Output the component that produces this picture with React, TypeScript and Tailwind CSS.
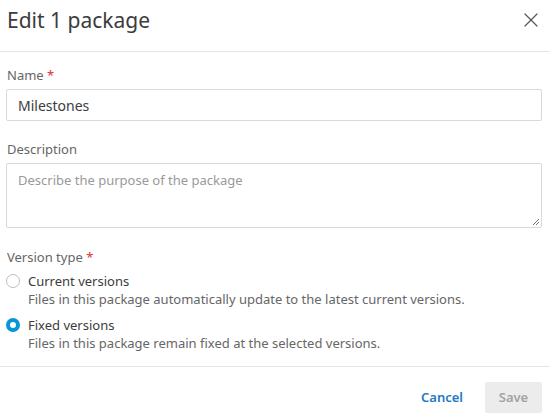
import { X } from 'lucide-react';

function Radio({ checked }: { checked: boolean }) {
  return checked ? (
    <span className="mt-[2px] w-[14px] h-[14px] rounded-full border-[4px] border-[#0696d7] bg-white shrink-0" />
  ) : (
    <span className="mt-[2px] w-[14px] h-[14px] rounded-full border border-[#bdbdbd] bg-white shrink-0" />
  );
}

export default function App() {
  const options = [
    { label: 'Current versions', desc: 'Files in this package automatically update to the latest current versions.', checked: false },
    { label: 'Fixed versions', desc: 'Files in this package remain fixed at the selected versions.', checked: true },
  ];

  return (
    <div className="w-[550px] h-[418px] bg-white flex flex-col text-[#3c3c3c]" style={{ fontFamily: '"Noto Sans", sans-serif' }}>
      {/* Header */}
      <div className="h-[52px] border-b border-[#e6e6e6] flex items-start justify-between pl-[7px] pr-[7px] pt-[5px]">
        <h1 className="text-[21px] leading-[30px] text-[#3c3c3c]">Edit 1 package</h1>
        <button className="mt-[3px] text-[#555]">
          <X className="w-[24px] h-[24px]" strokeWidth={1.2} />
        </button>
      </div>

      {/* Body */}
      <div className="flex-1 pl-[6px] pr-[8px] pt-[14px]">
        <label className="block pl-[1px] text-[13px] leading-[18px] text-[#666]">
          Name <span className="text-[#e02f2f]">*</span>
        </label>
        <div className="mt-[5px] h-[32px] border border-[#d9d9d9] rounded-[2px] flex items-center px-[11px] text-[14px]">
          Milestones
        </div>

        <label className="block mt-[19px] pl-[1px] text-[13px] leading-[18px] text-[#666]">Description</label>
        <div className="relative mt-[5px] h-[65px] border border-[#d9d9d9] rounded-[2px] px-[11px] pt-[7px] text-[13px] text-[#999]">
          Describe the purpose of the package
          <svg className="absolute right-[1px] bottom-[1px]" width="8" height="8" viewBox="0 0 8 8">
            <path d="M7 1 L1 7 M7 4 L4 7" stroke="#777" strokeWidth="1" />
          </svg>
        </div>

        <label className="block mt-[20px] pl-[1px] text-[13px] leading-[18px] text-[#666]">
          Version type <span className="text-[#e02f2f]">*</span>
        </label>
        <div className="mt-[6px] flex flex-col gap-[8px]">
          {options.map((o) => (
            <div key={o.label} className="flex gap-[8px]">
              <Radio checked={o.checked} />
              <div>
                <div className="text-[13px] leading-[18px] text-[#3c3c3c]">{o.label}</div>
                <div className="text-[13px] leading-[18px] text-[#666]">{o.desc}</div>
              </div>
            </div>
          ))}
        </div>
      </div>

      {/* Footer */}
      <div className="h-[52px] border-t border-[#e6e6e6] flex items-start justify-end gap-[22px] pr-[8px] pt-[15px]">
        <button className="h-[31px] text-[13px] font-semibold text-[#1e7ac2]">Cancel</button>
        <button className="w-[57px] h-[31px] rounded-[2px] bg-[#ececec] text-[13px] font-semibold text-[#a3a3a3]">Save</button>
      </div>
    </div>
  );
}
